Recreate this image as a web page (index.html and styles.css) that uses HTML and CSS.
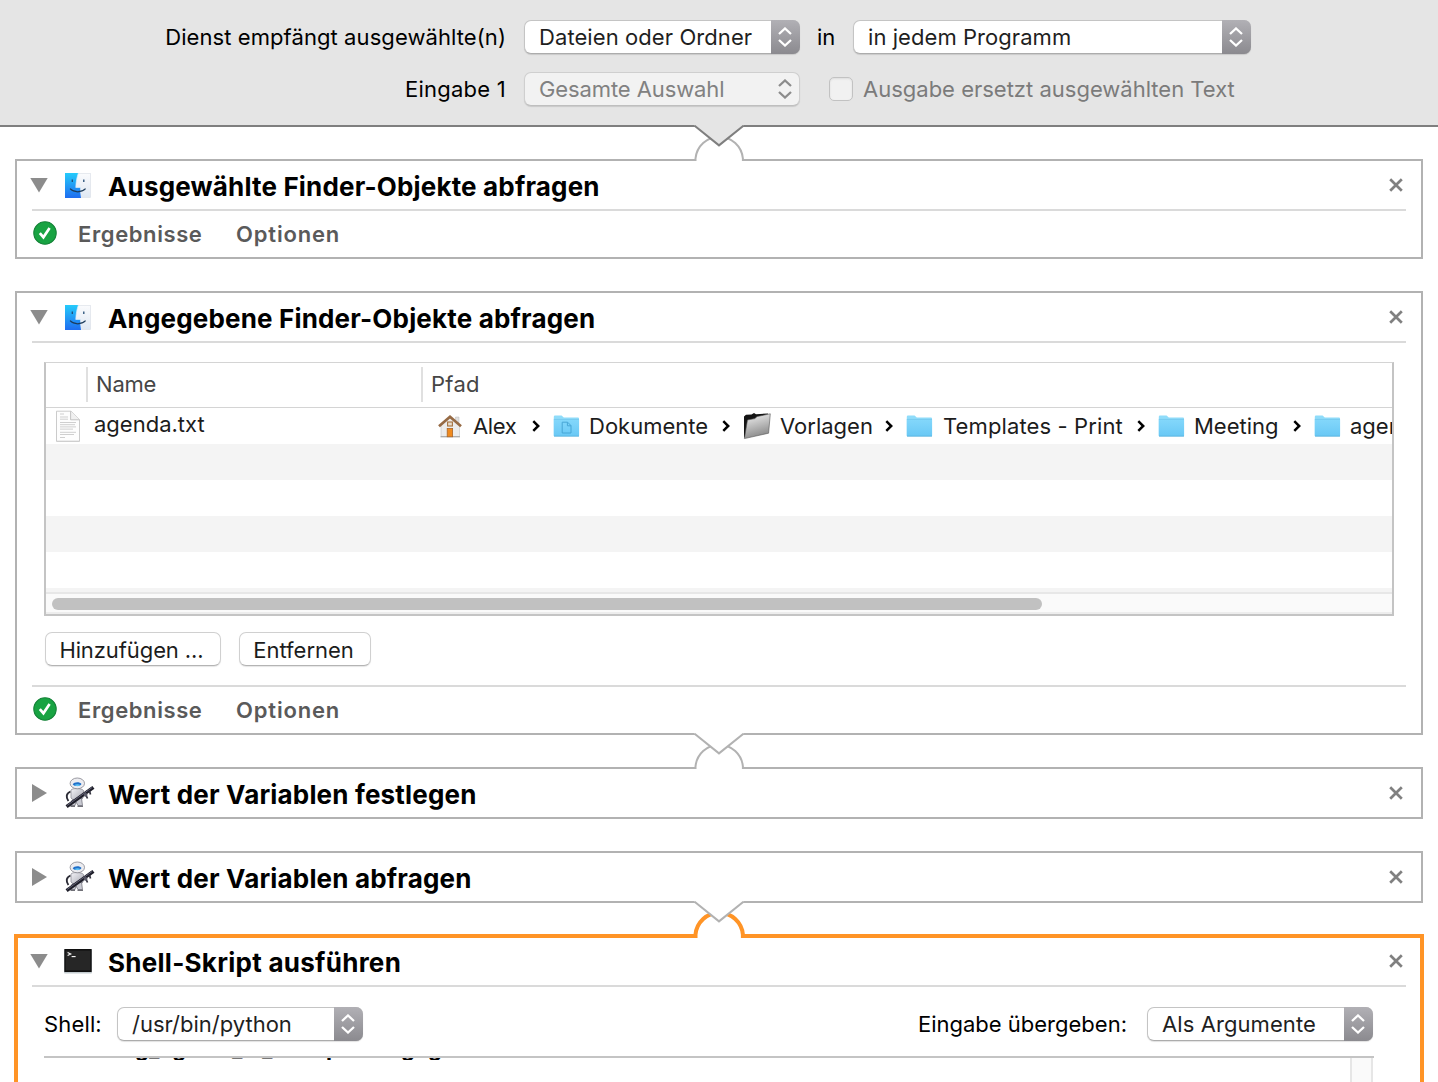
FILE: index.html
```html
<!DOCTYPE html>
<html lang="de">
<head>
<meta charset="utf-8">
<title>Automator</title>
<link rel="stylesheet" href="styles.css">
</head>
<body>
<svg class="defs" width="0" height="0" aria-hidden="true">
  <defs>
    <linearGradient id="gFace" x1="0" y1="0" x2="0" y2="1"><stop offset="0" stop-color="#25cbfb"/><stop offset="1" stop-color="#1f6df0"/></linearGradient>
    <linearGradient id="gFaceR" x1="0" y1="0" x2="0" y2="1"><stop offset="0" stop-color="#fafbfd"/><stop offset="1" stop-color="#dfe8f3"/></linearGradient>
    <linearGradient id="gFolder" x1="0" y1="0" x2="0" y2="1"><stop offset="0" stop-color="#83d7fb"/><stop offset="1" stop-color="#69c8f5"/></linearGradient>
    <linearGradient id="gDark" x1="0" y1="0" x2="0.3" y2="1"><stop offset="0" stop-color="#f4f4f4"/><stop offset="1" stop-color="#8b8b8b"/></linearGradient>
    <linearGradient id="gBot" x1="0" y1="0" x2="1" y2="1"><stop offset="0" stop-color="#f4f4f8"/><stop offset="1" stop-color="#a6a7b1"/></linearGradient>
  </defs>
  <symbol id="finder" viewBox="0 0 26 25">
    <rect x="0.5" y="0.5" width="25" height="24" fill="url(#gFaceR)" stroke="#dde2e8" stroke-width="0.7"/>
    <path d="M0 0H13.4C12 4 11 8.5 10.8 14.5H15.2C15 18 15.4 21.5 16 25H0Z" fill="url(#gFace)"/>
    <path d="M13.4 0C12 4 11 8.5 10.8 14.5H15.2" fill="none" stroke="#d8eefb" stroke-width="0.7"/>
    <path d="M7.3 6.4V9M18.8 6.4V9" stroke="#234d75" stroke-width="1.3"/>
    <path d="M5 15.7C9 19.8 16.5 19.8 20.6 15.7" fill="none" stroke="#1d3c5c" stroke-width="1.2"/>
  </symbol>
  <symbol id="robot" viewBox="0 0 30 32">
    <path d="M5.5 14.5C1 16.5 0.8 20.5 3.4 24" fill="none" stroke="#2b2b35" stroke-width="1.9"/>
    <path d="M6 13C7 11 17 11 18.5 13.5L18 21C16 24 8 24 6 21Z" fill="url(#gBot)" stroke="#83838e" stroke-width="0.7"/>
    <path d="M7 23L6 28.6H10L11 25L13 28.6H17.5L16.5 21Z" fill="#c9cad2" stroke="#6a6a75" stroke-width="0.7"/>
    <path d="M5.5 29.3H10M12.5 29.3H18" stroke="#44444d" stroke-width="1.1"/>
    <ellipse cx="12.3" cy="6.4" rx="7.2" ry="5.4" fill="#ececf0" stroke="#83838b" stroke-width="0.8"/>
    <path d="M7.7 7.2C9 4.6 15 4.4 16.5 7C15 9.7 9 9.7 7.7 7.2Z" fill="#1f6fc9"/>
    <path d="M9 8.2C11 7 14 7 15.5 8.2L12.5 9.2Z" fill="#62c5f6"/>
    <path d="M1.6 29.6L28.4 10.4" stroke="#1e1e29" stroke-width="3.6"/>
    <path d="M2.2 28.4L27.2 10.4" stroke="#6b6b80" stroke-width="0.9"/>
    <path d="M20.5 17L22.5 21.5M24.5 14L25.5 17.5" stroke="#33333f" stroke-width="1.7"/>
    <circle cx="20.6" cy="17.8" r="1.9" fill="#5b5b69"/>
  </symbol>
  <symbol id="terminal" viewBox="0 0 30 27">
    <rect x="1" y="1.5" width="28" height="24" rx="1" fill="#c3cbcf"/>
    <rect x="1.3" y="1" width="27.4" height="23" rx="0.6" fill="#101010"/>
    <rect x="2.6" y="2.6" width="24.8" height="19.8" fill="#262626"/>
    <path d="M4.6 4.4L7.8 6L4.6 7.6" fill="none" stroke="#fff" stroke-width="1.1"/>
    <path d="M8.6 8.6H12.6" stroke="#fff" stroke-width="1.1"/>
  </symbol>
  <symbol id="check" viewBox="0 0 24 24">
    <circle cx="12" cy="12" r="11.2" fill="#18a342" stroke="#148137" stroke-width="1.1"/>
    <path d="M6.8 12.2L10.4 16.2L16.6 7" fill="none" stroke="#fff" stroke-width="2.7"/>
  </symbol>
  <symbol id="close" viewBox="0 0 14 14">
    <path d="M1.2 1.2L12.8 12.8M12.8 1.2L1.2 12.8" stroke="#808080" stroke-width="2.7"/>
  </symbol>
  <symbol id="updown" viewBox="0 0 14 20">
    <path d="M1 7L7 1.5L13 7M1 13L7 18.5L13 13" fill="none" stroke="currentColor" stroke-width="2.3"/>
  </symbol>
  <symbol id="sep" viewBox="0 0 8 12">
    <path d="M1.3 1.2L6.2 6L1.3 10.8" fill="none" stroke="#000" stroke-width="2.5"/>
  </symbol>
  <symbol id="folder" viewBox="0 0 27 22">
    <path d="M0.8 1.8Q0.8 0.6 2 0.6H8.6L10.8 2.4H25Q26 2.4 26 3.4V21H0.8Z" fill="#8fdcfa"/>
    <path d="M0.8 4.6H26.1V20.4Q26.1 21.2 25.3 21.2H1.6Q0.8 21.2 0.8 20.4Z" fill="url(#gFolder)"/>
    <path d="M0.8 4.4H26" stroke="#6cbfe6" stroke-width="0.6"/>
    <path d="M1 21.2H26" stroke="#56aeda" stroke-width="0.8"/>
  </symbol>
  <symbol id="house" viewBox="0 0 24 24">
    <path d="M17.5 3H21V9H17.5Z" fill="#e0e0e0" stroke="#bbb" stroke-width="0.5"/>
    <path d="M3 10.5L12 3L21.5 10.5V22.5H3Z" fill="#ececec" stroke="#c4c4c4" stroke-width="0.6"/>
    <path d="M2.5 22.8H22" stroke="#9c9c9c" stroke-width="1"/>
    <path d="M1 12.2L12 2.8L23 12.2" fill="none" stroke="#966a44" stroke-width="2.7"/>
    <rect x="9.6" y="8" width="4.8" height="4" fill="#e8dccb" stroke="#a5713f" stroke-width="1.1"/>
    <rect x="9.2" y="14.4" width="5.4" height="8.4" fill="#f08a1e" stroke="#a9672a" stroke-width="0.8"/>
  </symbol>
  <symbol id="darkfolder" viewBox="0 0 28 28">
    <path d="M1 26V4.5L3 2.8L8.5 2.4L11 1L13 2.2L25 1.4L24 8L3 24Z" fill="#141414"/>
    <path d="M4.5 8L12 6.6L14 4.6L27.3 1.8L25.6 21.2L1.4 26.6Z" fill="url(#gDark)" stroke="#555" stroke-width="0.6"/>
  </symbol>
  <symbol id="textfile" viewBox="0 0 26 33">
    <path d="M1.5 1.2H16L24.5 9.6V31.2H1.5Z" fill="#d0d0d0" transform="translate(0 .8)"/>
    <path d="M1.5 1.2H16L24.5 9.6V31.2H1.5Z" fill="#fdfdfd" stroke="#c6c6c6" stroke-width="0.9"/>
    <path d="M15.6 1.2V9.8H24.5" fill="#f1f1f1" stroke="#bdbdbd" stroke-width="0.9"/>
    <path d="M5 4H9M5 7H13M5 9.2H13M5 12.5H21M5 14.7H20M5 16.9H21M5 19.1H18M5 22.3H21M5 24.5H19M5 27.5H10" stroke="#cfcfcf" stroke-width="1"/>
  </symbol>
</svg>

<header class="service">
  <div class="service-row">
    <span class="service-label">Dienst empfängt ausgewählte(n)</span>
    <div class="select select-type"><span>Dateien oder Ordner</span><i class="cap"><svg width="14" height="20"><use href="#updown"/></svg></i></div>
    <span class="service-in">in</span>
    <div class="select select-app"><span>in jedem Programm</span><i class="cap"><svg width="14" height="20"><use href="#updown"/></svg></i></div>
  </div>
  <div class="service-row">
    <span class="service-label label-input">Eingabe 1</span>
    <div class="select select-type disabled"><span>Gesamte Auswahl</span><i class="cap"><svg width="14" height="20"><use href="#updown"/></svg></i></div>
    <span class="checkbox"></span>
    <span class="replace">Ausgabe ersetzt ausgewählten Text</span>
  </div>
</header>

<main class="workflow">
  <section class="action">
    <svg class="link" width="52" height="37" viewBox="0 0 52 37">
      <path class="arc" d="M2.5 36V33.5A23.8 24 0 0 1 49.9 33.5V36"/>
      <path class="notch from-service" d="M1.6 -1V0.8L26 20.4L50.4 0.8V-1"/>
    </svg>
    <div class="head"><i class="tri down"></i><svg class="app finder" width="26" height="25"><use href="#finder"/></svg><h2>Ausgewählte Finder-Objekte abfragen</h2><svg class="close" width="14" height="14"><use href="#close"/></svg></div>
    <div class="foot"><svg width="24" height="24"><use href="#check"/></svg><b class="results">Ergebnisse</b><b class="options">Optionen</b></div>
  </section>

  <section class="action">
    <div class="head"><i class="tri down"></i><svg class="app finder" width="26" height="25"><use href="#finder"/></svg><h2>Angegebene Finder-Objekte abfragen</h2><svg class="close" width="14" height="14"><use href="#close"/></svg></div>
    <div class="content">
      <div class="files">
        <div class="columns"><span class="col-icon"></span><span class="col-name">Name</span><span class="col-path">Pfad</span></div>
        <div class="rows">
          <div class="row">
            <svg class="file-icon" width="26" height="33"><use href="#textfile"/></svg>
            <span class="file-name">agenda.txt</span>
            <div class="path">
              <span class="crumb"><svg width="24" height="24"><use href="#house"/></svg><span class="alex">Alex</span><svg class="sep" width="8" height="12"><use href="#sep"/></svg></span>
              <span class="crumb"><svg width="27" height="22"><use href="#folder"/><path d="M9.2 7.2H14.6L18 10.6V18H9.2ZM14.4 7.4V10.8H18" fill="none" stroke="#47a6d6" stroke-width="1"/></svg><span>Dokumente</span><svg class="sep" width="8" height="12"><use href="#sep"/></svg></span>
              <span class="crumb"><svg width="28" height="28"><use href="#darkfolder"/></svg><span>Vorlagen</span><svg class="sep" width="8" height="12"><use href="#sep"/></svg></span>
              <span class="crumb"><svg width="27" height="22"><use href="#folder"/></svg><span class="tpl">Templates - Print</span><svg class="sep" width="8" height="12"><use href="#sep"/></svg></span>
              <span class="crumb"><svg width="27" height="22"><use href="#folder"/></svg><span>Meeting</span><svg class="sep" width="8" height="12"><use href="#sep"/></svg></span>
              <span class="crumb"><svg width="27" height="22"><use href="#folder"/></svg><span>agenda.txt</span></span>
            </div>
          </div>
        </div>
        <div class="hscroll"><div class="thumb"></div></div>
      </div>
      <div class="buttons"><button class="add">Hinzufügen ...</button><button class="remove">Entfernen</button></div>
    </div>
    <div class="foot"><svg width="24" height="24"><use href="#check"/></svg><b class="results">Ergebnisse</b><b class="options">Optionen</b></div>
  </section>

  <section class="action">
    <svg class="link" width="52" height="37" viewBox="0 0 52 37">
      <path class="arc" d="M2.5 36V33.5A23.8 24 0 0 1 49.9 33.5V36"/>
      <path class="notch" d="M1.6 -1V0.8L26 20.4L50.4 0.8V-1"/>
    </svg>
    <div class="head"><i class="tri right"></i><svg class="app robot" width="30" height="32"><use href="#robot"/></svg><h2>Wert der Variablen festlegen</h2><svg class="close" width="14" height="14"><use href="#close"/></svg></div>
  </section>

  <section class="action">
    <div class="head"><i class="tri right"></i><svg class="app robot" width="30" height="32"><use href="#robot"/></svg><h2>Wert der Variablen abfragen</h2><svg class="close" width="14" height="14"><use href="#close"/></svg></div>
  </section>

  <section class="action selected">
    <svg class="link" width="52" height="38" viewBox="0 0 52 38">
      <path class="arc" d="M2.5 37V33.5A23.8 24 0 0 1 49.9 33.5V37"/>
      <path class="notch" d="M1.6 -1V0.8L26 20.4L50.4 0.8V-1"/>
    </svg>
    <div class="head"><i class="tri down"></i><svg class="app terminal" width="30" height="27"><use href="#terminal"/></svg><h2 class="shell-title">Shell-Skript ausführen</h2><svg class="close" width="14" height="14"><use href="#close"/></svg></div>
    <div class="shell">
      <span class="shell-label">Shell:</span>
      <div class="select select-shell"><span>/usr/bin/python</span><i class="cap"><svg width="14" height="20"><use href="#updown"/></svg></i></div>
      <span class="pass-label">Eingabe übergeben:</span>
      <div class="select select-pass"><span>Als Argumente</span><i class="cap"><svg width="14" height="20"><use href="#updown"/></svg></i></div>
    </div>
    <div class="script">
      <div class="code"><span>g_ag</span><span>_</span><span>_</span><span>p</span><span>g</span><span>g</span></div>
      <div class="vscroll"></div>
    </div>
  </section>
</main>
</body>
</html>
```
FILE: styles.css
```css
* { box-sizing: border-box; }
html, body { height: 100%; }
body {
  margin: 0;
  background: #fff;
  color: #000;
  font: 22px/28px Inter, "Liberation Sans", sans-serif;
  overflow: hidden;
  display: flex;
  flex-direction: column;
  white-space: nowrap;
}
svg { display: block; flex: none; }
.defs { position: absolute; }

/* Service settings */
.service {
  flex: none;
  height: 127px;
  padding-top: 20px;
  display: flex;
  flex-direction: column;
  gap: 18px;
  background: #e5e5e5;
  border-bottom: 2px solid #7f7f7f;
}
.service-row { display: flex; align-items: center; height: 34px; }
.service-label { width: 506px; margin-right: 18px; text-align: right; letter-spacing: 0.08px; }
.label-input { letter-spacing: 0.25px; }
.service-in { width: 53px; padding-left: 17px; }
.checkbox {
  width: 24px;
  height: 24px;
  margin: 0 10px 0 29px;
  border: 1px solid #c2c2c2;
  border-radius: 5px;
  background: #f1f1f1;
  box-shadow: inset 0 1px 2px #dcdcdc;
}
.replace { color: #7b7b7b; }

.select {
  flex: none;
  display: flex;
  align-items: stretch;
  justify-content: space-between;
  height: 34px;
  padding-left: 14px;
  line-height: 32px;
  color: #1f1f1f;
  background: #fff;
  border: 1px solid #c4c4c4;
  border-bottom-color: #acacac;
  border-radius: 7px;
  box-shadow: 0 1px 1px rgba(0, 0, 0, 0.12);
}
.cap {
  width: 29px;
  margin: -1px;
  padding-right: 1px;
  display: flex;
  align-items: center;
  justify-content: center;
  color: #fff;
  background: linear-gradient(#b1b0b5, #8b8a8f);
  border-radius: 0 7px 7px 0;
}
.disabled { color: #818181; background: #f2f2f2; border-color: #cfcfcf; border-bottom-color: #bfbfbf; }
.disabled .cap { background: none; color: #8c8c8c; }
.select-type { width: 276px; letter-spacing: 0.08px; }
.select-type.disabled { letter-spacing: -0.1px; }
.select-app { width: 398px; letter-spacing: 0.06px; }
.select-shell { width: 246px; }
.select-pass { width: 226px; letter-spacing: 0.08px; }

/* Workflow actions */
.workflow { flex: none; padding: 32px 15px 0; display: flex; flex-direction: column; gap: 32px; }
.action { position: relative; border: 2px solid #b2b2b2; padding: 0 15px; }
.selected { margin: -1px -1px 0; border: 4px solid #ff9426; border-bottom: 0; padding: 0 14px; height: 150px; }

.link { position: absolute; left: 676px; top: -36px; overflow: visible; }
.selected .link { left: 675px; top: -37px; }
.arc { fill: #fff; stroke: #b2b2b2; stroke-width: 2; }
.notch { fill: #fff; stroke: #b2b2b2; stroke-width: 2; stroke-dasharray: 0 1.8 62.6 10; }
.notch.from-service { fill: #e5e5e5; stroke: #7f7f7f; }
.selected .arc { stroke: #ff9426; stroke-width: 4; }

.head { display: flex; align-items: center; height: 50px; border-bottom: 2px solid #dadada; }
.selected .head { height: 49px; padding-bottom: 1px; }
.action > .head:last-child { height: 48px; border-bottom: 0; }
.tri { flex: none; width: 18px; height: 15px; margin-left: -2px; margin-right: 16px; background: #8c8c8c; clip-path: polygon(0 0, 100% 0, 50% 100%); }
.tri.right { width: 15px; height: 18px; margin-left: 0; margin-right: 17px; clip-path: polygon(0 0, 100% 50%, 0 100%); }
.app.finder { margin-left: 1px; margin-right: 17px; }
.app.robot { margin-left: 1px; margin-right: 13px; }
.app.terminal { margin-left: -1px; margin-right: 15px; }
h2 { flex: 1; margin: 0; padding-top: 4px; font: 700 26px/32px Inter, "Liberation Sans", sans-serif; letter-spacing: 0.17px; }
.shell-title { letter-spacing: 0.27px; }
.close { margin-right: 3px; }

.foot { display: flex; align-items: center; height: 46px; padding-left: 1px; color: #5a5a5a; }
.foot b { font-weight: 600; }
.foot svg { margin-top: -2px; }
.results { width: 179px; padding-left: 21px; letter-spacing: 0.6px; }
.options { letter-spacing: 0.83px; }

/* File table */
.content { height: 344px; padding: 19px 12px 0; border-bottom: 2px solid #dadada; }
.files { height: 254px; border: 2px solid #c4c4c4; border-top: 1px solid #d4d4d4; display: flex; flex-direction: column; overflow: hidden; }
.columns { flex: none; display: flex; align-items: center; height: 45px; padding-bottom: 2px; border-bottom: 1px solid #d4d4d4; color: #464646; }
.columns span { height: 35px; line-height: 35px; }
.col-icon { width: 42px; border-right: 2px solid #e0e0e0; }
.col-name { width: 335px; padding-left: 8px; border-right: 2px solid #e0e0e0; letter-spacing: -0.2px; }
.col-path { padding-left: 8px; letter-spacing: 0.27px; }
.rows { flex: none; height: 184px; background: repeating-linear-gradient(#fff 0 36px, #f4f4f4 36px 72px); }
.row { display: flex; align-items: center; height: 36px; color: #1c1c1c; overflow: hidden; }
.file-icon { margin-left: 9px; }
.file-name { flex: none; width: 358px; padding: 0 0 4px 13px; }
.path { flex: none; display: grid; grid-template-columns: 115px 190px 163px 252px 156px 200px; }
.crumb { display: flex; align-items: center; height: 36px; }
.crumb span { flex: 1; padding-left: 9px; }
.crumb .alex { padding-left: 11px; letter-spacing: -0.4px; }
.crumb .tpl { padding-left: 10px; letter-spacing: 0.12px; }
.sep { margin-right: 14px; }
.crumb > svg:first-child { margin-left: -1px; }
.hscroll { flex: 1; padding: 4px 6px 2px; background: #fafafa; border-top: 2px solid #e7e7e7; border-bottom: 2px solid #ededed; }
.thumb { width: 990px; height: 12px; border-radius: 6px; background: #c1c1c1; }

.buttons { display: flex; gap: 18px; padding: 16px 0 0 1px; }
button {
  height: 34px;
  padding: 1px 3px 0 0;
  font: inherit;
  line-height: 30px;
  color: #1c1c1c;
  background: #fff;
  border: 1px solid #d0d0d0;
  border-bottom-color: #b4b4b4;
  border-radius: 7px;
  box-shadow: 0 1px 1px rgba(0, 0, 0, 0.1);
}
.add { width: 176px; letter-spacing: -0.09px; }
.remove { width: 132px; }

/* Shell options */
.shell { display: flex; align-items: center; height: 34px; margin-top: 20px; padding-left: 12px; }
.shell-label { width: 73px; letter-spacing: 0.15px; }
.pass-label { margin-left: auto; margin-right: 20px; }
.select-pass { margin-right: 33px; }
.script { display: flex; justify-content: space-between; margin: 15px 32px 0 12px; border-top: 2px solid #c4c4c4; height: 40px; overflow: hidden; }
.code { display: grid; grid-template-columns: 97px 30px 64px 75px 27px 30px; height: 2px; padding-left: 91px; overflow: hidden; font-weight: 700; }
.code span { margin-top: -24px; line-height: 28px; }
.vscroll { width: 23px; margin-right: 1px; background: #fafafa; border: solid #e6e6e6; border-width: 0 2px; }
```
